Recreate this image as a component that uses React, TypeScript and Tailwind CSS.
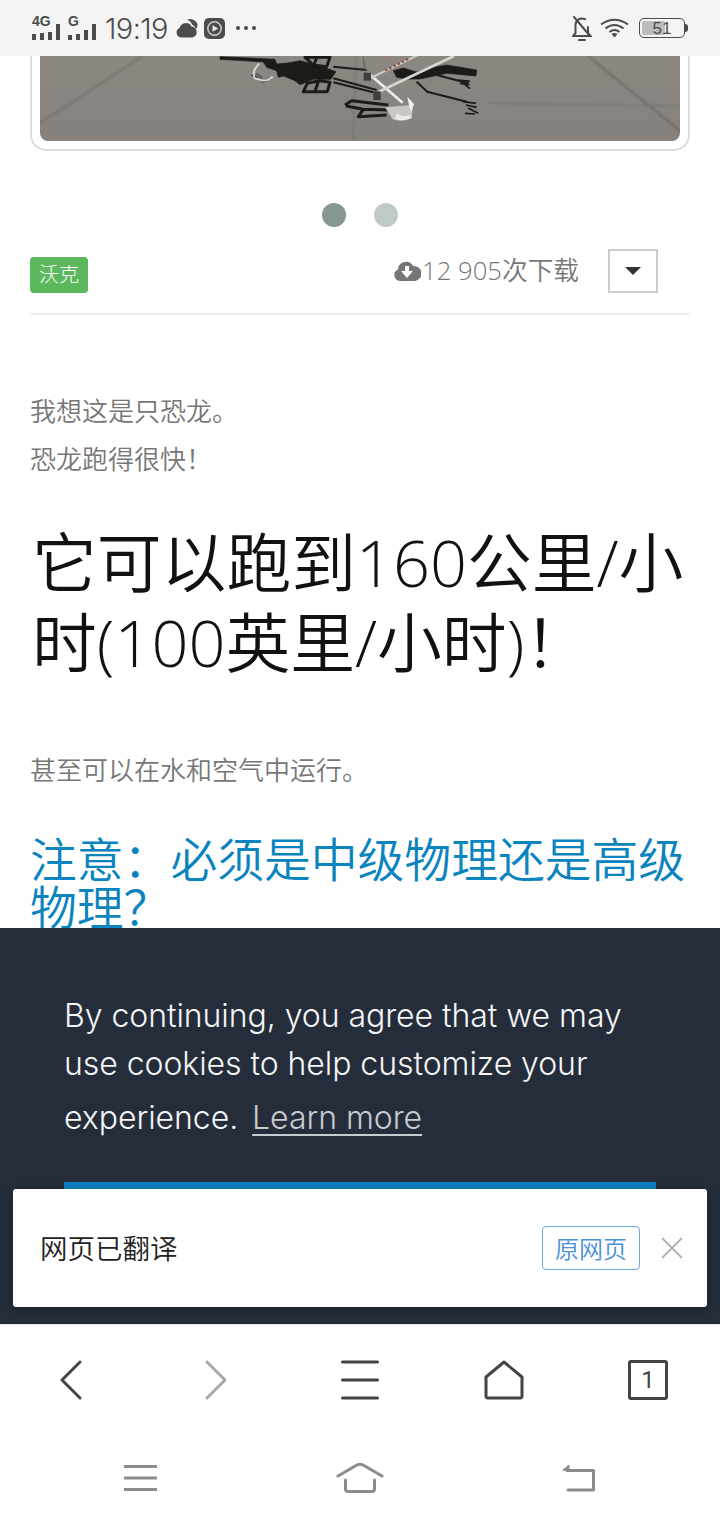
import React from 'react';

const sans = "font-['Open_Sans','Noto_Sans_CJK_SC',sans-serif]";

const Photo: React.FC = () => (
  <svg viewBox="0 0 640 85" className="block w-full h-full">
    <defs>
      <linearGradient id="floor" x1="0" y1="0" x2="0" y2="1">
        <stop offset="0" stopColor="#8c8781" />
        <stop offset="1" stopColor="#86817c" />
      </linearGradient>
      <filter id="soft"><feGaussianBlur stdDeviation="0.5" /></filter>
      <filter id="crack"><feGaussianBlur stdDeviation="0.8" /></filter>
    </defs>
    <rect width="640" height="85" fill="url(#floor)" />
    <g fill="none" filter="url(#crack)">
      <path d="M0 67 L103 0" stroke="#6c6864" strokeWidth="1.2" />
      <path d="M548 0 L640 75" stroke="#65615d" strokeWidth="1.6" />
      <path d="M447 47 L640 50" stroke="#73706b" strokeWidth="1.2" />
      <path d="M316 0 L313 85" stroke="#7b7772" strokeWidth="2" />
    </g>
    <g transform="translate(180 -6) scale(0.3333)" filter="url(#soft)">
      <g fill="#1c1a19" stroke="#1c1a19" strokeLinejoin="round">
        <path d="M0 20 L130 26 L165 28 L170 42 L210 38 L240 32 L300 48 L348 65 L332 88 L280 88 L240 104 L225 92 L190 78 L175 82 L170 62 L140 52 L130 36 L0 28Z" strokeWidth="2" />
        <path d="M520 62 L550 54 L590 66 L650 50 L680 45 L770 60 L768 78 L680 70 L600 87 L560 87 L530 82Z" strokeWidth="2" />
        <path d="M255 22 H330 L320 50 L280 45Z M290 24 L282 44 M300 92 L330 97 L322 125 H250 L262 100Z M295 95 L285 124" fill="none" strokeWidth="9" />
        <path d="M340 50 L440 60 M340 85 L470 120 M340 97 L460 127" fill="none" strokeWidth="6" />
        <path d="M430 20 L435 62" fill="none" stroke="#5d5a56" strokeWidth="3" />
        <path d="M375 165 L395 152 L505 165 M378 168 L430 178 L415 200 L500 195 M430 178 L510 180" fill="none" strokeWidth="9" />
        <path d="M650 75 L745 100 M590 95 L622 125 L740 155" fill="none" strokeWidth="6" />
        <path d="M715 90 L750 94 M720 100 L748 104 M735 104 L750 116 M730 155 L768 160 M738 165 L770 172 M745 175 L775 190 M735 190 L765 192" fill="none" strokeWidth="5" />
        <path d="M95 75 L130 95 L155 85" fill="none" strokeWidth="6" />
      </g>
      <path d="M118 40 Q92 68 105 85 L130 92 Q148 92 158 80" fill="none" stroke="#d9d7d3" strokeWidth="6" />
      <path d="M108 70 L128 85" fill="none" stroke="#55524f" strokeWidth="5" />
      <path d="M495 172 L578 165 L576 205 Q545 218 518 208Z" fill="#c9c7c4" />
      <path d="M530 190 Q550 205 570 195 L572 205 Q545 216 525 206Z" fill="#ecebe9" />
      <path d="M562 140 L582 162 L574 186 L568 170Z" fill="#f2f0ec" />
      <path d="M445 70 L548 158" stroke="#efece7" strokeWidth="8" fill="none" />
      <path d="M475 126 L702 18" stroke="#d8d5d0" strokeWidth="8" fill="none" />
      <path d="M452 84 L592 16" stroke="#cfcbc6" strokeWidth="6" fill="none" />
      <path d="M495 62 L566 26" stroke="#8f4f3e" strokeWidth="6" strokeDasharray="8 6" fill="none" />
      <rect x="431" y="68" width="22" height="24" fill="#3f3c3a" />
      <rect x="460" y="124" width="22" height="26" fill="#3f3c3a" />
    </g>
  </svg>
);

const StatusBar: React.FC = () => (
  <div className="h-14 bg-[#f4f4f4] shrink-0 flex items-center pl-8 pr-8 text-[#4c4c4c]">
    <svg width="65" height="25" viewBox="0 0 65 25" fill="#4c4c4c" className="shrink-0 -mt-[2px] overflow-visible">
      <text x="0" y="11" fontSize="14" fontWeight="700" fontFamily="Liberation Sans">4G</text>
      <rect x="0" y="19" width="4" height="6" />
      <rect x="8" y="18" width="4" height="7" />
      <rect x="16" y="17" width="4" height="8" />
      <rect x="24" y="9" width="4" height="16" />
      <text x="36" y="11" fontSize="14" fontWeight="700" fontFamily="Liberation Sans">G</text>
      <rect x="36" y="20" width="4" height="5" />
      <rect x="44" y="19" width="4" height="6" />
      <rect x="52" y="15" width="4" height="10" />
      <rect x="60" y="9" width="4" height="16" />
    </svg>
    <span className="ml-2 text-[29px] leading-none font-['Inter',sans-serif] font-light tracking-[-0.6px]">19:19</span>
    <svg width="22" height="20" viewBox="0 0 22 20" fill="#4c4c4c" className="ml-[8px]">
      <path d="M11 2 A7.5 7.5 0 0 1 21.5 6 A7 7 0 0 1 20 11 A7 7 0 0 0 16 6.5 A7 7 0 0 0 11 2Z" />
      <path d="M5 19.5 A5 5 0 0 1 3.5 10 A6.5 6.5 0 0 1 15.5 8.5 A5.6 5.6 0 0 1 16.5 19.5Z" />
    </svg>
    <svg width="21" height="21" viewBox="0 0 21 21" className="ml-[6px]">
      <rect width="21" height="21" rx="5" fill="#4c4c4c" />
      <circle cx="10.5" cy="10.5" r="6.7" fill="none" stroke="#cfcfcf" strokeWidth="1.5" />
      <path d="M8.5 7.3 L14.2 10.5 L8.5 13.7Z" fill="#e8e8e8" />
    </svg>
    <span className="ml-[11px] flex gap-[4px]">
      <i className="w-[4px] h-[4px] rounded-full bg-[#4c4c4c]" />
      <i className="w-[4px] h-[4px] rounded-full bg-[#4c4c4c]" />
      <i className="w-[4px] h-[4px] rounded-full bg-[#4c4c4c]" />
    </span>
    <div className="ml-auto flex items-center">
      <svg width="20" height="25" viewBox="0 0 20 25" fill="none" stroke="#4c4c4c" strokeWidth="2" strokeLinecap="round">
        <path d="M3.5 17 V9 A6.5 6.5 0 0 1 13 3.2 M16 11 V17 L18.5 20 H1 L3.5 17" />
        <path d="M7 24 H13" />
        <path d="M2 1 L18 20" />
      </svg>
      <svg width="29" height="20" viewBox="0 0 29 20" fill="none" stroke="#4c4c4c" strokeWidth="2" className="ml-[8px]">
        <path d="M1 6.5 Q14.5 -3 28 6.5" />
        <path d="M5.5 10.5 Q14.5 3.5 23.5 10.5" />
        <path d="M9.5 14 Q14.5 10 19.5 14" />
        <path d="M11.5 16 L14.5 19.5 L17.5 16 Q14.5 14 11.5 16Z" fill="#4c4c4c" stroke="none" />
      </svg>
      <div className="ml-[10px] flex items-center">
        <div className="relative w-[46px] h-5 rounded-[5px] border border-[#4c4c4c] overflow-hidden flex items-center justify-center">
          <div className="absolute left-[2px] top-[2px] bottom-[2px] w-[23px] rounded-[2px] bg-[#bdbdbd]" />
          <span className="relative text-[17px] leading-none font-['Liberation_Sans',sans-serif]">51</span>
        </div>
        <div className="w-[3px] h-2 bg-[#4c4c4c] rounded-r-sm" />
      </div>
    </div>
  </div>
);

const BrowserNav: React.FC = () => (
  <div className="h-[106px] bg-white shrink-0 border-t border-[#e4e6ee] grid grid-cols-5 items-center justify-items-center pt-[5px]">
    <svg width="22" height="40" viewBox="0 0 22 40" fill="none" stroke="#444" strokeWidth="3" strokeLinecap="round" strokeLinejoin="round" className="-ml-[2px]">
      <path d="M20 2 L2 20 L20 38" />
    </svg>
    <svg width="22" height="40" viewBox="0 0 22 40" fill="none" stroke="#a6a6a6" strokeWidth="3" strokeLinecap="round" strokeLinejoin="round">
      <path d="M2 2 L20 20 L2 38" />
    </svg>
    <svg width="38" height="40" viewBox="0 0 38 40" fill="none" stroke="#444" strokeWidth="3" strokeLinecap="round">
      <path d="M1.5 2 H36.5 M1.5 20 H36.5 M1.5 38 H36.5" />
    </svg>
    <svg width="40" height="40" viewBox="0 0 40 40" fill="none" stroke="#444" strokeWidth="3" strokeLinejoin="round">
      <path d="M20 2 L38 17 V36 Q38 38 36 38 H4 Q2 38 2 36 V17Z" />
    </svg>
    <div className="w-10 h-10 rounded-[3px] border-[3px] border-[#444] flex items-center justify-center text-[#444] text-[24px] leading-none font-['Roboto',sans-serif]">1</div>
  </div>
);

const SystemNav: React.FC = () => (
  <div className="h-[90px] bg-white shrink-0 flex items-center justify-between pl-[124px] pr-[124px] pt-[6px]">
    <svg width="34" height="26" viewBox="0 0 34 26" fill="none" stroke="#8c8c8c" strokeWidth="3">
      <path d="M0 1.5 H33 M0 13 H33 M0 24.5 H33" />
    </svg>
    <svg width="48" height="30" viewBox="0 0 48 30" fill="none" stroke="#8c8c8c" strokeWidth="3" strokeLinecap="round" strokeLinejoin="round">
      <path d="M2 13 L21 2 Q24 0.5 27 2 L46 13" />
      <path d="M9.5 17 V26 Q9.5 28.5 12 28.5 H36 Q38.5 28.5 38.5 26 V17" />
    </svg>
    <svg width="34" height="28" viewBox="0 0 34 28" fill="none" stroke="#8c8c8c" strokeWidth="3" strokeLinejoin="round" strokeLinecap="round">
      <path d="M5 6.5 H31.5 V26 H6" />
      <path d="M1 6 L7 1 V6Z" fill="#8c8c8c" strokeWidth="1" />
    </svg>
  </div>
);

const App: React.FC = () => {
  return (
    <div className={`relative w-[720px] h-[1520px] overflow-hidden bg-white flex flex-col ${sans}`}>
      <StatusBar />

      <main className="h-[872px] shrink-0 overflow-hidden px-[30px]">
        <div className="h-[95px] border-x-2 border-b-2 border-[#dcdcdc] rounded-b-[16px] px-2 pb-2">
          <div className="h-full rounded-b-[8px] overflow-hidden">
            <Photo />
          </div>
        </div>

        <div className="flex justify-center gap-[28px] mt-[52px]">
          <i className="w-6 h-6 rounded-full bg-[#869791]" />
          <i className="w-6 h-6 rounded-full bg-[#c0cbc8]" />
        </div>

        <div className="flex items-start h-[66px] mt-[22px] border-b-2 border-[#eeeeee]">
          <span className="mt-2 h-9 w-[58px] rounded-[4px] bg-[#5cb85c] text-white text-[20px] font-light flex items-center justify-center">沃克</span>
          <div className="h-11 ml-[306px] w-[185px] flex items-center gap-[1px]">
            <svg width="27" height="22" viewBox="0 0 27 22" fill="#777" className="shrink-0">
              <path d="M6 21 A6 6 0 0 1 4 9.5 A8 8 0 0 1 19 6 A7.5 7.5 0 0 1 21 21Z" />
              <path d="M11 6 H15 V11 H19 L13 18 L7 11 H11Z" fill="#fff" />
            </svg>
            <span className="text-[25.7px] leading-none font-[350] text-[#777] whitespace-nowrap">12 905次下载</span>
          </div>
          <div className="w-[50px] h-[44px] border-2 border-[#cccccc] flex items-center justify-center ml-[29px]">
            <i className="w-0 h-0 border-x-[8px] border-x-transparent border-t-[8px] border-t-[#333]" />
          </div>
        </div>

        <p className="mt-[72px] text-[26px] leading-[48px] font-[350] text-[#777]">我想这是只恐龙。</p>
        <p className="text-[26px] leading-[48px] font-[350] text-[#777]">恐龙跑得很快！</p>

        <h1 className="mt-[39px] pl-[2px] text-[64.8px] leading-[80px] font-[350] text-[#111] -mr-[4px]">它可以跑到160公里/小时(100英里/小时)！</h1>

        <p className="mt-[64px] text-[26px] leading-[48px] font-[350] text-[#777]">甚至可以在水和空气中运行。</p>

        <h2 className="mt-[41px] text-[46.8px] leading-[48px] font-[350] text-[#0a84bf] -mr-[4px]">注意：必须是中级物理还是高级物理？</h2>
      </main>

      <section className="h-[396px] shrink-0 bg-[#252d3a] px-[64px] pt-[64px] font-['Inter',sans-serif] font-light text-[#f4f5f6]">
        <p className="text-[32px] leading-[48px] tracking-[-0.06px]">
          By continuing, you agree that we may use cookies to help customize your experience.
          <a className="inline-block ml-[14px] leading-[60px] text-[#c8cbd0] underline underline-offset-[5px] decoration-2">Learn more</a>
        </p>
        <div className="mt-[34px] h-[60px] bg-[#0a7fc0]" />
      </section>

      <BrowserNav />
      <SystemNav />

      <div className="absolute left-[13px] top-[1189px] w-[694px] h-[118px] bg-white rounded-[3px] shadow-[0_2px_8px_rgba(0,0,0,0.35)] flex items-center pl-[27px] pr-[23px] font-['Noto_Sans_CJK_SC',sans-serif]">
        <span className="text-[27.5px] font-[350] text-[#222]">网页已翻译</span>
        <div className="ml-auto w-[98px] h-11 rounded-[4px] border border-[#70a8e0] flex items-center justify-center text-[24px] font-[350] text-[#4a90d9]">原网页</div>
        <svg width="24" height="24" viewBox="0 0 24 24" fill="none" stroke="#b4b4b4" strokeWidth="2" className="ml-5">
          <path d="M2 2 L22 22 M22 2 L2 22" />
        </svg>
      </div>
    </div>
  );
};

export default App;
